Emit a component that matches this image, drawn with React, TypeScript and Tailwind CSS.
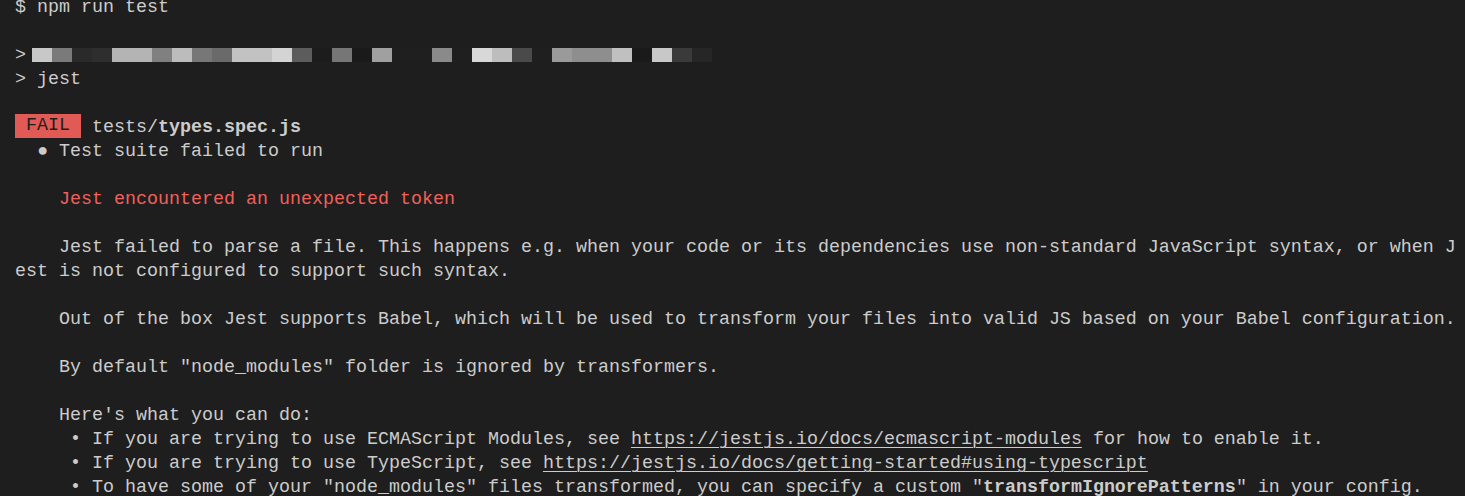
import React from "react";

// pixelated block that hides the package script line
const mosaic = [
  "#c8c8c8", "#7a7a7a", "#2a2a2a", "#2e2e2e", "#b4b4b4", "#b4b4b4", "#808080",
  "#bcbcbc", "#777777", "#6a6a6a", "#c2c2c2", "#c2c2c2", "#d4d4d4", "#5c5c5c",
  "#1c1c1c", "#767676", "#1a1a1a", "#a0a0a0", "#1f1f1f", "#1f1f1f", "#8a8a8a",
  "#1f1f1f", "#d8d8d8", "#bdbdbd", "#4a4a4a", "#1f1f1f", "#9a9a9a", "#8e8e8e",
  "#8e8e8e", "#c0c0c0", "#1a1a1a", "#c8c8c8", "#3a3a3a", "#262626",
];

const Line = ({ children }: { children?: React.ReactNode }) => (
  <div className="h-[24px] leading-[24px] whitespace-pre">{children ?? " "}</div>
);

const Link = ({ children }: { children: React.ReactNode }) => (
  <span className="underline underline-offset-[3px] decoration-[1px]">{children}</span>
);

const App = () => {
  return (
    <div className="w-[1465px] h-[496px] overflow-hidden bg-[#1e1e1e]">
      <div
        className="-mt-[4px] pl-[15px] text-[18.33px] text-[#cccccc]"
        style={{ fontFamily: '"Liberation Mono", "DejaVu Sans Mono", monospace' }}
      >
        <Line>$ npm run test</Line>
        <Line />
        <div className="h-[24px] leading-[24px] whitespace-pre flex items-center">
          <span>{"> "}</span>
          <div className="flex h-[14px] -ml-[5px] mt-[-2px]">
            {mosaic.map((c, i) => (
              <div key={i} className="w-[20px] h-full" style={{ backgroundColor: c }} />
            ))}
          </div>
        </div>
        <Line>{"> jest"}</Line>
        <Line />
        <Line>
          <span className="inline-block h-[24px] align-top -mt-[2px] bg-[#e15a55] text-[#1e1e1e]">{" FAIL "}</span>
          {" tests/"}
          <span className="font-bold">types.spec.js</span>
        </Line>
        <Line>{"  ● Test suite failed to run"}</Line>
        <Line />
        <Line>
          <span className="text-[#f0605a]">{"    Jest encountered an unexpected token"}</span>
        </Line>
        <Line />
        <Line>
          {"    Jest failed to parse a file. This happens e.g. when your code or its dependencies use non-standard JavaScript syntax, or when J"}
        </Line>
        <Line>est is not configured to support such syntax.</Line>
        <Line />
        <Line>
          {"    Out of the box Jest supports Babel, which will be used to transform your files into valid JS based on your Babel configuration."}
        </Line>
        <Line />
        <Line>{'    By default "node_modules" folder is ignored by transformers.'}</Line>
        <Line />
        <Line>{"    Here's what you can do:"}</Line>
        <Line>
          {"     • If you are trying to use ECMAScript Modules, see "}
          <Link>https://jestjs.io/docs/ecmascript-modules</Link>
          {" for how to enable it."}
        </Line>
        <Line>
          {"     • If you are trying to use TypeScript, see "}
          <Link>https://jestjs.io/docs/getting-started#using-typescript</Link>
        </Line>
        <Line>
          {'     • To have some of your "node_modules" files transformed, you can specify a custom "'}
          <span className="font-bold">transformIgnorePatterns</span>
          {'" in your config.'}
        </Line>
      </div>
    </div>
  );
};

export default App;
